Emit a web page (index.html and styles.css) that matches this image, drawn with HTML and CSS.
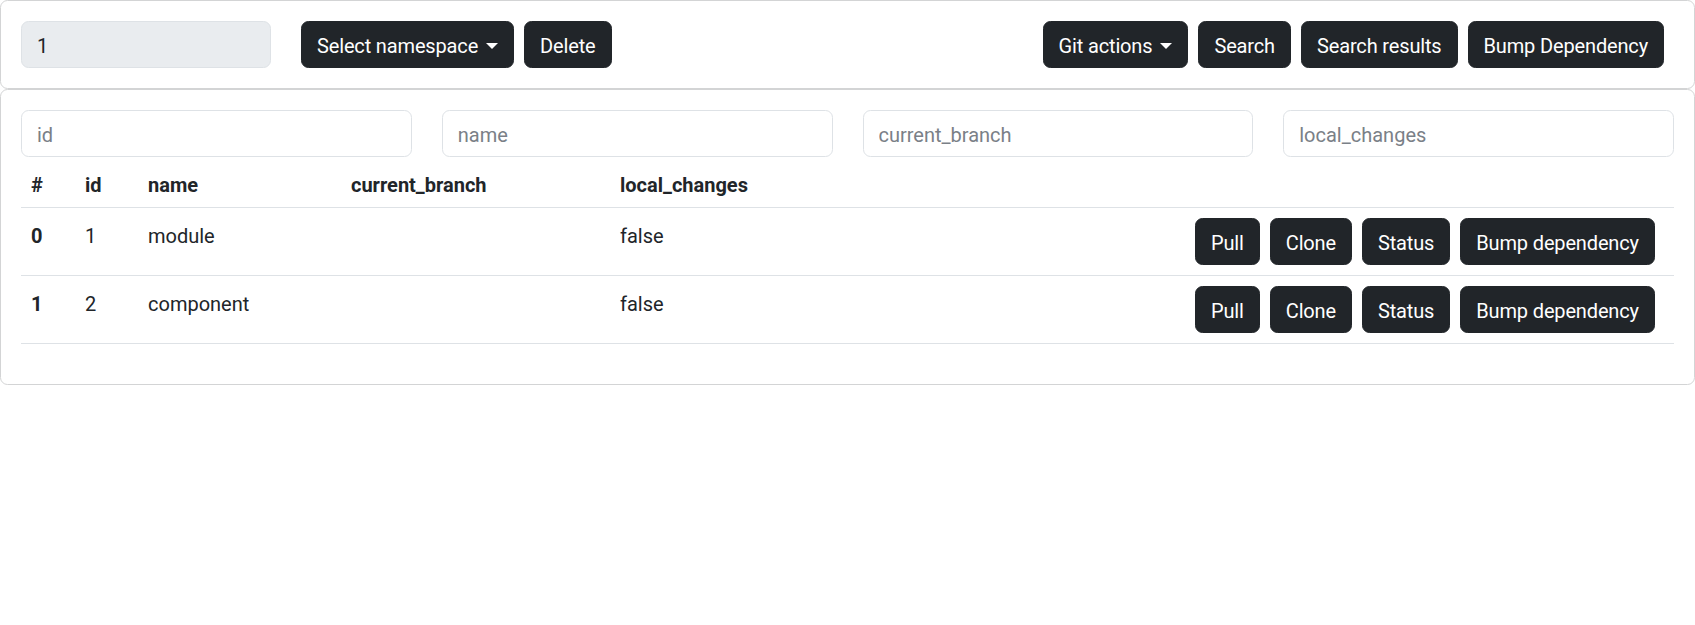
FILE: index.html
```html
<!DOCTYPE html>
<html lang="en">
<head>
<meta charset="utf-8">
<title>Repositories</title>
<link rel="stylesheet" href="styles.css">
</head>
<body>
<div class="card toolbar">
  <div class="toolbar-left">
    <input class="form-control readonly ns-input" type="text" value="1" readonly>
    <button class="btn dropdown-toggle">Select namespace</button>
    <button class="btn">Delete</button>
  </div>
  <div class="toolbar-right">
    <button class="btn dropdown-toggle">Git actions</button>
    <button class="btn">Search</button>
    <button class="btn">Search results</button>
    <button class="btn">Bump Dependency</button>
  </div>
</div>
<div class="card main">
  <div class="filters">
    <input class="form-control" type="text" placeholder="id">
    <input class="form-control" type="text" placeholder="name">
    <input class="form-control" type="text" placeholder="current_branch">
    <input class="form-control" type="text" placeholder="local_changes">
  </div>
  <table class="table">
    <colgroup>
      <col class="c-idx"><col class="c-id"><col class="c-name"><col class="c-branch"><col class="c-local"><col class="c-actions">
    </colgroup>
    <thead>
      <tr><th>#</th><th>id</th><th>name</th><th>current_branch</th><th>local_changes</th><th></th></tr>
    </thead>
    <tbody>
      <tr>
        <th>0</th><td>1</td><td>module</td><td></td><td>false</td>
        <td class="actions"><button class="btn">Pull</button><button class="btn">Clone</button><button class="btn">Status</button><button class="btn">Bump dependency</button></td>
      </tr>
      <tr>
        <th>1</th><td>2</td><td>component</td><td></td><td>false</td>
        <td class="actions"><button class="btn">Pull</button><button class="btn">Clone</button><button class="btn">Status</button><button class="btn">Bump dependency</button></td>
      </tr>
    </tbody>
  </table>
</div>
</body>
</html>
```

FILE: styles.css
```css
* { box-sizing: border-box; }
html, body { margin: 0; padding: 0; }
body {
  font-family: Roboto, "Noto Sans", "Liberation Sans", sans-serif;
  font-size: 20px;
  line-height: 1.5;
  color: #212529;
  background: #fff;
}
.card {
  border: 1px solid #d3d4d5;
  border-radius: 7.5px;
  background: #fff;
  padding: 20px;
}
.toolbar {
  display: flex;
  justify-content: space-between;
  align-items: center;
}
.toolbar-left, .toolbar-right {
  display: flex;
  align-items: center;
}
.btn {
  font-family: inherit;
  font-size: 20px;
  line-height: 30px;
  padding: 8.5px 15px 6.5px;
  border: 1px solid #212529;
  border-radius: 7.5px;
  background: #212529;
  color: #fff;
  margin-right: 10px;
  white-space: nowrap;
  letter-spacing: -0.15px;
  cursor: pointer;
}
.dropdown-toggle::after {
  content: "";
  display: inline-block;
  margin-left: 8px;
  vertical-align: 4px;
  border-top: 6px solid #fff;
  border-left: 6px solid transparent;
  border-right: 6px solid transparent;
}
.form-control {
  font-family: inherit;
  font-size: 20px;
  line-height: 30px;
  padding: 8.5px 15px 6.5px;
  border: 1px solid #dee2e6;
  border-radius: 7.5px;
  color: #212529;
  background: #fff;
  width: 100%;
  outline: none;
}
.form-control::placeholder { color: #7a8087; }
.form-control.readonly { background: #e9ecef; }
.ns-input {
  width: 250px;
  margin-right: 30px;
}
.filters {
  display: grid;
  grid-template-columns: repeat(4, 1fr);
  column-gap: 30px;
}
.table {
  width: 100%;
  border-collapse: collapse;
  table-layout: fixed;
  margin-bottom: 20px;
}
.c-idx { width: 54px; }
.c-id { width: 63px; }
.c-name { width: 203px; }
.c-branch { width: 269px; }
.c-local { width: 575px; }
.table th, .table td {
  padding: 12.5px 10px 7.5px;
  text-align: left;
  vertical-align: top;
  border-bottom: 1px solid #dee2e6;
  font-weight: 400;
}
.table th { font-weight: 700; }
.table td.actions {
  padding: 10px;
  white-space: nowrap;
}
```
